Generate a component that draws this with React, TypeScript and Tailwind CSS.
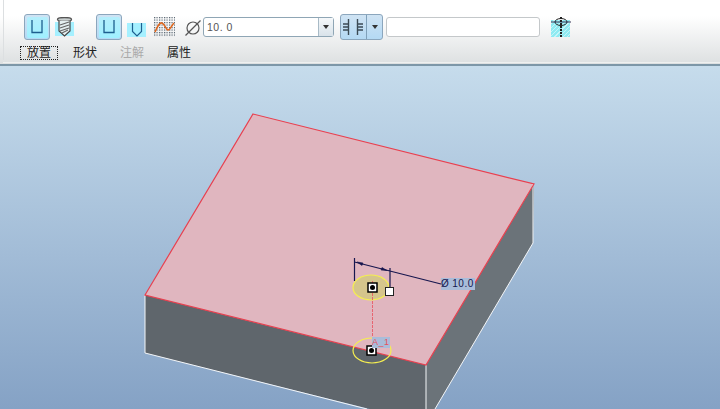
import * as React from 'react';

const UIcon = () => (
    <svg width="12" height="14" viewBox="0 0 12 14" fill="none" stroke="#1d5f8f" strokeWidth="1.3">
        <path d="M1 0v12.500h10V0" />
    </svg>
);

const ActiveButton: React.FC<{ className?: string; children: React.ReactNode }> = ({ className, children }) => (
    <div className={`w-[26px] h-[26px] rounded-[3px] border border-[#8ba6bd] bg-gradient-to-b from-[#cfe3f3] to-[#b4d9f4] flex items-center justify-center ${className ?? ''}`}>
        <div className="w-[21px] h-[21px] rounded-[2px] bg-gradient-to-b from-[#b4eefc] to-[#9ff0ff] flex items-center justify-center">{children}</div>
    </div>
);

const DrillIcon = () => (
    <div className="relative w-[19px] h-[20px] ml-[5px] mt-[3px]">
        <div className="absolute left-0 right-0 top-[5px] h-[14px] bg-[#a5f0ff]" />
        <svg className="absolute inset-0" width="19" height="20" viewBox="0 0 19 20" fill="none">
            <ellipse cx="9.500" cy="2.500" rx="7" ry="2" fill="#c9cfcf" stroke="#555" strokeWidth="1.300" />
            <path d="M4 4v10l5.500 5 5.500-5V4" fill="#e4eff0" stroke="#444" strokeWidth="1.200" />
            <path d="M5 8l9-3M5 11l9-3M5 14l9-3M7 16l6-3" stroke="#666" strokeWidth="1.200" />
        </svg>
    </div>
);

const VIcon = () => (
    <div className="w-[19px] h-[14px] ml-[5px] mt-[9px] bg-[#a5f0ff] flex items-start justify-center">
        <svg width="12" height="14" viewBox="0 0 12 14" fill="none" stroke="#1d5f8f" strokeWidth="1.200">
            <path d="M1.500 0v8.500L6 13l4.500-4.500V0" />
        </svg>
    </div>
);

const ProfileIcon = () => (
    <svg className="ml-[8px] mt-[3px]" width="21" height="20" viewBox="0 0 21 20" fill="none">
        <defs>
            <pattern id="dots" width="2.500" height="2.500" patternUnits="userSpaceOnUse">
                <rect width="1.200" height="1.200" fill="#4d5a66" />
            </pattern>
        </defs>
        <rect width="21" height="20" fill="url(#dots)" />
        <path d="M1 15C3 11 5 5 8 6s4 7 6 7 4-5 6-7" stroke="#e0661c" strokeWidth="1.600" />
    </svg>
);

const Caret = () => <div className="w-0 h-0 border-x-[3.500px] border-x-transparent border-t-[4px] border-t-[#333]" />;

const CounterboreIcon = () => (
    <div className="relative w-[21px] h-[21px] ml-[10px] mt-[3px]">
        <div className="absolute left-[1px] right-[1px] top-[3px] bottom-[1px] bg-[repeating-linear-gradient(135deg,#8eeaf2_0px,#8eeaf2_2px,#c4f5f8_2px,#c4f5f8_3px)]" />
        <svg className="absolute inset-0" width="21" height="21" viewBox="0 0 21 21" fill="none" stroke="#222">
            <ellipse cx="11" cy="5" rx="6" ry="3.500" strokeWidth="1" />
            <path d="M1 5h20" strokeWidth="1" stroke="#335" />
            <path d="M11 0v21" strokeWidth="2" strokeDasharray="2 1" />
        </svg>
    </div>
);

const Toolbar = () => (
    <div className="h-[66px] shrink-0 pl-[3px] bg-gradient-to-b from-white from-[25%] to-[#dde0e1] border-b-2 border-[#7d97a8] flex flex-col">
        <div className="h-[60px] border-l border-[#dcdfe1] flex flex-col">
            <div className="flex items-start pl-[20px] pt-[14px] h-[46px]">
                <ActiveButton><UIcon /></ActiveButton>
                <DrillIcon />
                <ActiveButton className="ml-[22px]"><UIcon /></ActiveButton>
                <VIcon />
                <ProfileIcon />
                <svg className="ml-[10px] mt-[6px]" width="16" height="16" viewBox="0 0 16 16" fill="none" stroke="#555" strokeWidth="1.200">
                    <circle cx="8" cy="8" r="6" />
                    <path d="M0.500 15.500 15.500 0.500" />
                </svg>
                <div className="ml-[2px] mt-[3px] w-[131px] h-[20px] bg-white border border-[#8fa6b5] rounded-[3px] flex">
                    <span className="flex-1 pl-[3px] text-[10.500px] leading-[18px] text-[#555] tracking-[0.5px]">10. 0</span>
                    <div className="w-[15px] border-l border-[#a8bac6] bg-gradient-to-b from-[#f5f8fa] to-[#d9e3ea] flex items-center justify-center">
                        <Caret />
                    </div>
                </div>
                <div className="ml-[6px] w-[43px] h-[26px] rounded-[3px] border border-[#8ba6bd] bg-gradient-to-b from-[#cfe3f3] to-[#b4d9f4] flex">
                    <div className="w-[25px] pl-[2px] flex items-center">
                        <svg width="21" height="16" viewBox="0 0 21 16" fill="none" stroke="#3b4a55" strokeWidth="1.400">
                            <path d="M5.500 0v16M14.500 0v16M0 5h5.500M0 8h5.500M0 11h5.500M14.500 5h5.500M14.500 8h5.500M14.500 11h5.500" />
                        </svg>
                    </div>
                    <div className="flex-1 border-l border-[#7fa0ba] flex items-center justify-center">
                        <Caret />
                    </div>
                </div>
                <div className="ml-[3px] mt-[3px] w-[154px] h-[20px] bg-white border border-[#c4c8ca] rounded-[3px]" />
                <CounterboreIcon />
            </div>
            <div className="flex items-start pl-[16px] text-[12px] leading-[14px] text-[#222]">
                <span className="w-[38px] h-[14px] border border-dotted border-[#222] text-center leading-[12px]">放置</span>
                <span className="ml-[15px]">形状</span>
                <span className="ml-[23px] text-[#aaaaaa]">注解</span>
                <span className="ml-[23px]">属性</span>
            </div>
        </div>
        <div className="h-px bg-[#eef0f0] mt-[2px]" />
    </div>
);

const Model = () => (
    <svg className="absolute inset-0" width="720" height="343" viewBox="0 66 720 343" fill="none">
        <polygon points="145,295 426,365 426,423 145,353" fill="#5f666c" />
        <polygon points="426,365 534,184 533,243 435,409 426,409" fill="#6b7379" />
        <polygon points="253,114 534,184 426,365 145,295" fill="#e0b6bf" />
        <path d="M145 295V353L367 409M426 365V409M533 184V243L435 409" stroke="#f4f6f8" strokeWidth="1" />
        <path d="M253 114 534 184 426 365 145 295Z" stroke="#e8404f" strokeWidth="1.200" />
        <ellipse cx="371" cy="287.500" rx="18" ry="12.500" fill="#d5c58c" stroke="#f5ee50" strokeWidth="1.200" />
        <ellipse cx="372" cy="350.500" rx="19" ry="12.500" stroke="#f5ee50" strokeWidth="1.200" />
        <path d="M372.500 281V337" stroke="#e8505c" strokeWidth="0.800" strokeDasharray="3 1" />
        <path d="M354.500 258V281M390 268V287M354.500 262 441 284" stroke="#16164e" strokeWidth="1.200" />
        <path d="M357 262l6 1-1 2.500ZM387 270.500l-6-.5 1-2.500Z" fill="#16164e" stroke="#16164e" strokeWidth="0.600" />
        <rect x="368" y="283" width="9" height="9" fill="white" stroke="black" strokeWidth="1.500" />
        <circle cx="372.500" cy="287.500" r="2.500" fill="black" />
        <rect x="367" y="346" width="9" height="9" fill="white" stroke="black" strokeWidth="1.500" />
        <circle cx="371.500" cy="350.500" r="2.500" fill="black" />
        <rect x="385.500" y="287.500" width="8" height="8" fill="white" stroke="#222" />
    </svg>
);

export default function App() {
    return (
        <div className="w-[720px] h-[409px] overflow-hidden flex flex-col font-['Liberation_Sans','Noto_Sans_CJK_SC',sans-serif]">
            <Toolbar />
            <div className="relative flex-1 bg-gradient-to-b from-[#c6dcec] to-[#85a2c5]">
                <Model />
                <span className="absolute left-[441px] top-[212px] w-[34px] h-[12px] bg-[#a9bcd9] text-[10px] leading-[12px] text-[#16164e] tracking-[0.5px] whitespace-nowrap overflow-hidden">Ø<span className="ml-[3px]">10.0</span></span>
                <span className="absolute left-[372px] top-[271px] w-[18px] h-[11px] bg-[#a9bcd9] text-[9px] leading-[11px] text-[#e8505c] tracking-[0.5px] whitespace-nowrap overflow-hidden">A_1</span>
            </div>
        </div>
    );
}
